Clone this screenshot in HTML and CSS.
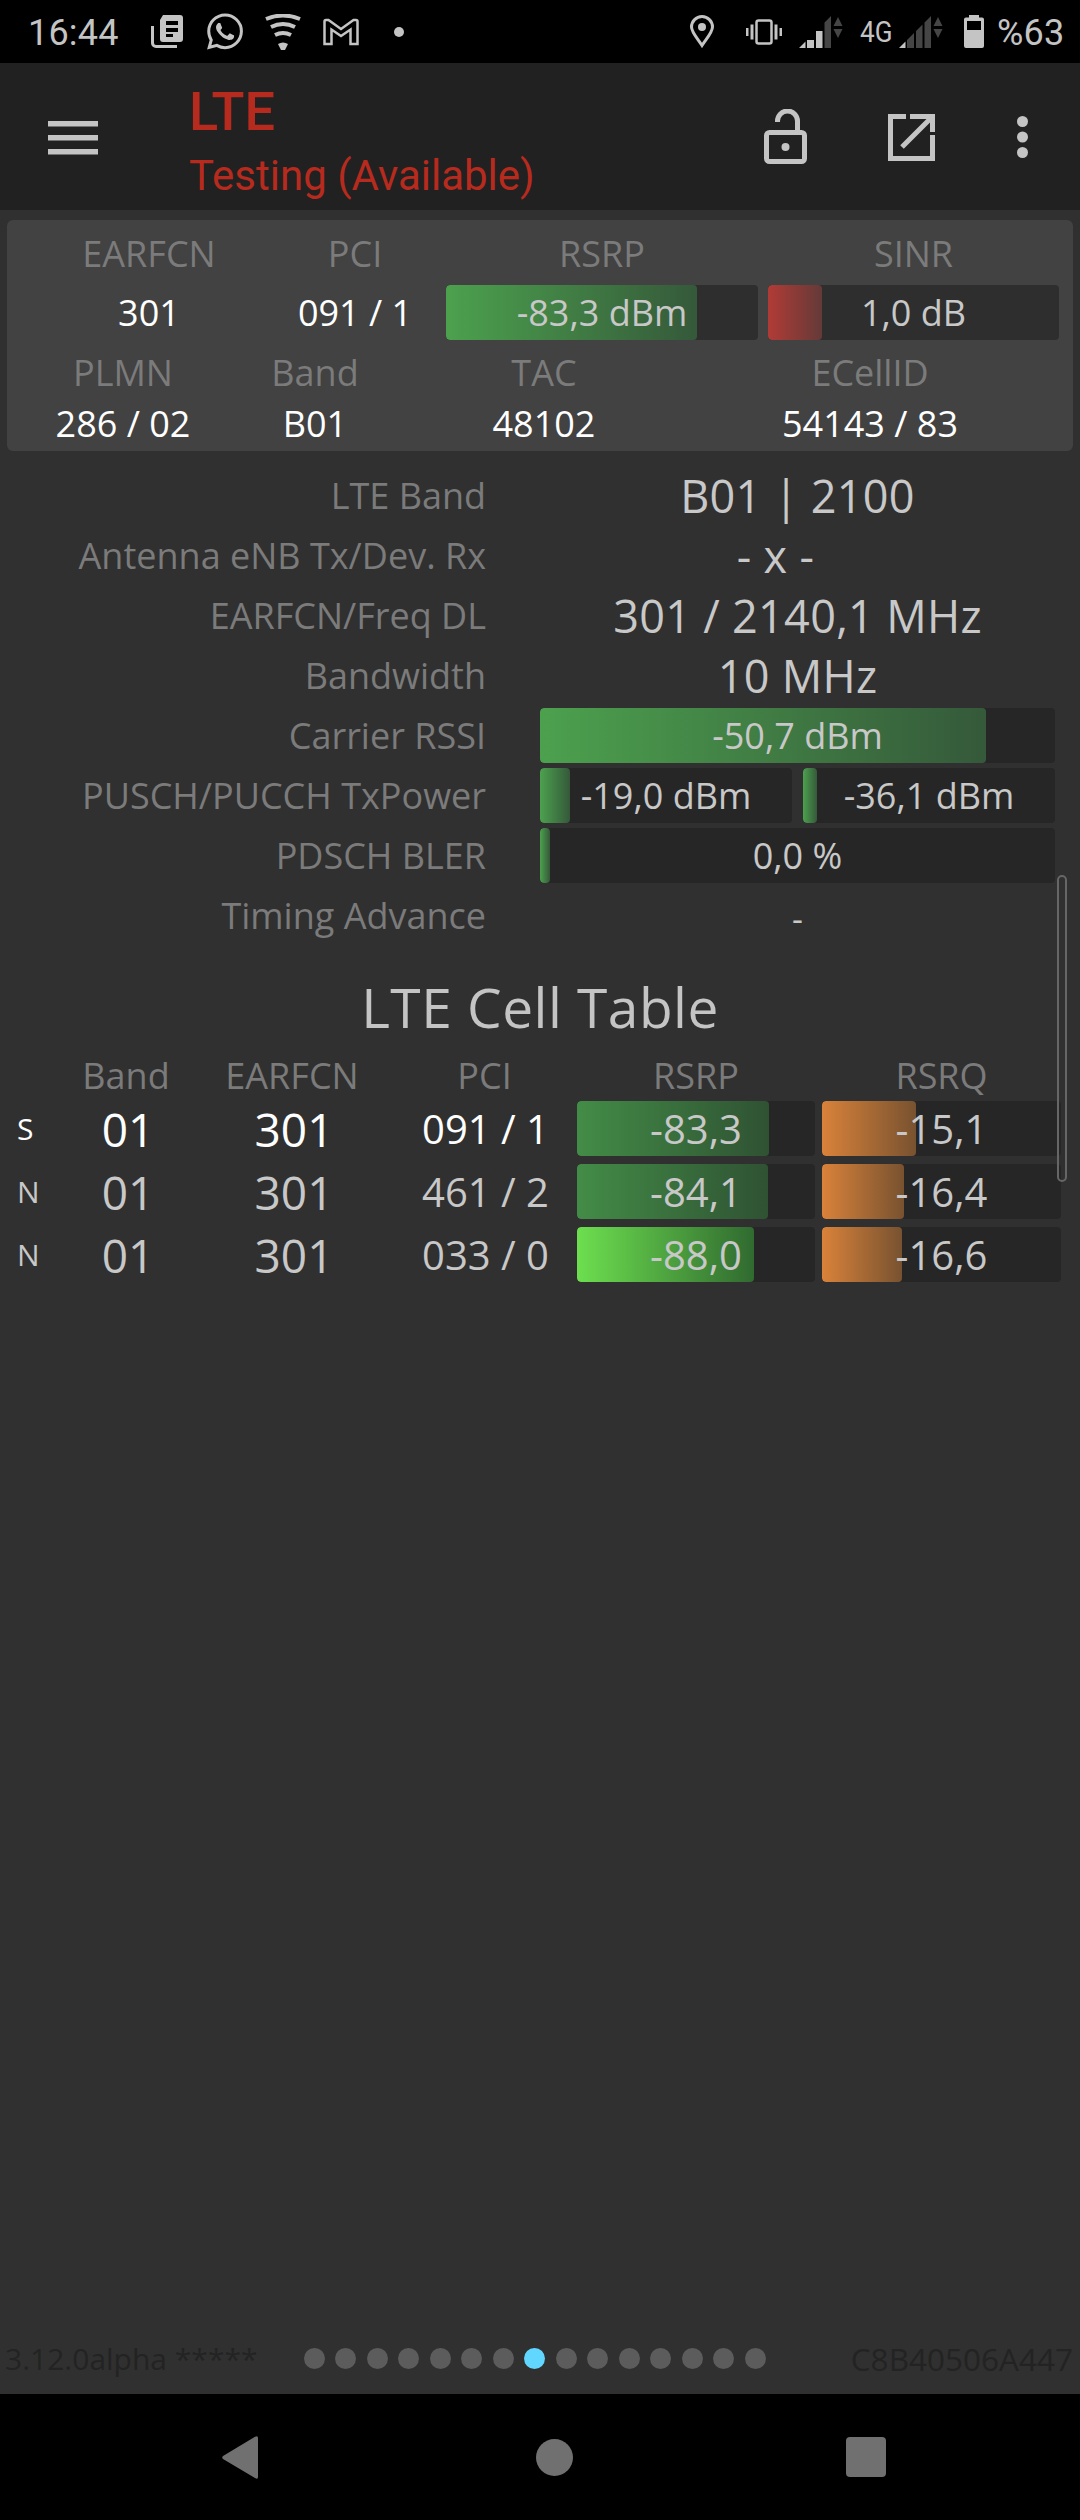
FILE: index.html
```html
<!DOCTYPE html>
<html lang="en">
<head>
<meta charset="utf-8">
<title>LTE Testing</title>
<link rel="stylesheet" href="styles.css">
</head>
<body>
<div class="app">
  <header class="status">
    <span class="clock">16:44</span>
    <svg class="ic ic-news" viewBox="0 0 32 33"><path class="f" fill-rule="evenodd" d="M9 5 12 0H29a3 3 0 0 1 3 3V24a3 3 0 0 1-3 3H12a3 3 0 0 1-3-3ZM15 6V10H27V6ZM15 13V17H27V13ZM15 19V22H22V19Z"/><path class="s3" d="M1.5 11V28a3.500 3.500 0 0 0 3.500 3.500H26"/></svg>
    <svg class="ic ic-wa" viewBox="0 0 24 24"><path class="f" d="M17.472 14.382c-.297-.149-1.758-.867-2.03-.967-.273-.099-.471-.148-.67.15-.197.297-.767.966-.94 1.164-.173.199-.347.223-.644.075-.297-.15-1.255-.463-2.39-1.475-.883-.788-1.48-1.761-1.653-2.059-.173-.297-.018-.458.13-.606.134-.133.298-.347.446-.52.149-.174.198-.298.298-.497.099-.198.05-.371-.025-.52-.075-.149-.669-1.612-.916-2.207-.242-.579-.487-.5-.669-.51-.173-.008-.371-.01-.57-.01-.198 0-.52.074-.792.372-.272.297-1.04 1.016-1.04 2.479 0 1.462 1.065 2.875 1.213 3.074.149.198 2.096 3.2 5.077 4.487.709.306 1.262.489 1.694.625.712.227 1.36.195 1.871.118.571-.085 1.758-.719 2.006-1.413.248-.694.248-1.289.173-1.413-.074-.124-.272-.198-.57-.347m-5.421 7.403h-.004a9.87 9.87 0 01-5.031-1.378l-.361-.214-3.741.982.998-3.648-.235-.374a9.86 9.86 0 01-1.51-5.26c.001-5.45 4.436-9.884 9.888-9.884 2.64 0 5.122 1.03 6.988 2.898a9.825 9.825 0 012.893 6.994c-.003 5.45-4.437 9.884-9.885 9.884m8.413-18.297A11.815 11.815 0 0012.05 0C5.495 0 .16 5.335.157 11.892c0 2.096.547 4.142 1.588 5.945L.057 24l6.305-1.654a11.882 11.882 0 005.683 1.448h.005c6.554 0 11.89-5.335 11.893-11.893a11.821 11.821 0 00-3.48-8.413z"/></svg>
    <svg class="ic ic-wifi" viewBox="0 0 36 36"><path class="s4" d="M1 5Q18-2 35 5M6 13Q18 7 30 13M10 21Q18 17 26 21"/><path class="f" d="M13 30Q18 27 23 30L20 36H16Z"/></svg>
    <svg class="ic ic-m" viewBox="0 0 36 28"><path class="s25" d="M3 2H5.500L18 11 30.500 2H33A1.500 1.500 0 0 1 34.500 3.500V26H27.500V11.500L18 18 8.500 11.500V26H1.500V3.500A1.500 1.500 0 0 1 3 2Z"/></svg>
    <span class="ndot"></span>
    <span class="sp"></span>
    <svg class="ic ic-pin" viewBox="0 0 24 33"><path class="s3" d="M12 30.500C7 23 1.500 17 1.500 12A10.500 10.500 0 0 1 22.500 12C22.500 17 17 23 12 30.500Z"/><circle class="f" cx="12" cy="12" r="4"/></svg>
    <svg class="ic ic-vib" viewBox="0 0 36 26"><rect class="s25" x="10.500" y="1.500" width="15" height="23" rx="2"/><path class="f" d="M0 9H2.500V17H0ZM4.500 5.500H7.500V20.500H4.500ZM28.500 5.500H31.500V20.500H28.500ZM33.500 9H36V17H33.500Z"/></svg>
    <svg class="ic ic-sig" viewBox="0 0 44 32"><path class="f" d="M0 32 6.500 25.500V32ZM8 24H15V32H8ZM17 15H23.500V32H17Z"/><path class="d" d="M25.500 6.500 32 0V32H25.500ZM39 1 43.500 10H34.500ZM34.500 13H43.500L39 22Z"/></svg>
    <span class="net">4G</span>
    <svg class="ic ic-sig2" viewBox="0 0 44 32"><path class="f" d="M0 32 6.500 25.500V32Z"/><path class="d" d="M8 24 15 17V32H8ZM17 15 23.500 8.500V32H17ZM25.500 6.500 32 0V32H25.500ZM39 1 43.500 10H34.500ZM34.500 13H43.500L39 22Z"/></svg>
    <svg class="ic ic-bat" viewBox="0 0 20 33"><path class="f" fill-rule="evenodd" d="M5 0H15V2.500H18A2 2 0 0 1 20 4.500V31A2 2 0 0 1 18 33H2A2 2 0 0 1 0 31V4.500A2 2 0 0 1 2 2.500H5ZM3 6V15H17V6Z"/></svg>
    <span class="pct">%63</span>
  </header>

  <header class="bar">
    <svg class="ic ic-menu" viewBox="0 0 50 34"><path class="f" d="M0 0H50V5.500H0ZM0 14H50V19.500H0ZM0 28H50V33.500H0Z"/></svg>
    <div class="titles">
      <div class="t1">LTE</div>
      <div class="t2">Testing (Available)</div>
    </div>
    <svg class="ic ic-lock" viewBox="0 0 43 55"><path class="s5" d="M13.500 13V12A10 10 0 0 1 33.500 12V22"/><rect class="s5" x="2.500" y="23.500" width="38" height="29" rx="3"/><circle class="f" cx="21.500" cy="38" r="4"/></svg>
    <svg class="ic ic-open" viewBox="0 0 47 47"><path class="s5" d="M18 2.500H2.500V44.500H44.500V21"/><path class="s5" d="M14 33 42 5M22 2.500H44.500V18"/></svg>
    <svg class="ic ic-more" viewBox="0 0 11 42"><circle class="f" cx="5.500" cy="5.500" r="5.500"/><circle class="f" cx="5.500" cy="21" r="5.500"/><circle class="f" cx="5.500" cy="36.500" r="5.500"/></svg>
  </header>

  <main class="main">
    <section class="card">
      <div class="card-top">
        <div class="lb">EARFCN</div>
        <div class="lb">PCI</div>
        <div class="lb push27">RSRP</div>
        <div class="lb push10">SINR</div>
        <div class="val">301</div>
        <div class="val">091 / 1</div>
        <div class="meter push27 on-card"><div class="fill green" style="width:251px"></div><span>-83,3 dBm</span></div>
        <div class="meter push10 on-card"><div class="fill red" style="width:54px"></div><span>1,0 dB</span></div>
      </div>
      <div class="card-bottom">
        <div class="lb">PLMN</div>
        <div class="lb">Band</div>
        <div class="lb">TAC</div>
        <div class="lb">ECellID</div>
        <div class="val">286 / 02</div>
        <div class="val">B01</div>
        <div class="val">48102</div>
        <div class="val">54143 / 83</div>
      </div>
    </section>

    <section class="info">
      <div class="k">LTE Band</div><div class="v">B01 | 2100</div>
      <div class="k">Antenna eNB Tx/Dev. Rx</div><div class="v off">- x -</div>
      <div class="k">EARFCN/Freq DL</div><div class="v">301 / 2140,1 MHz</div>
      <div class="k">Bandwidth</div><div class="v">10 MHz</div>
      <div class="k">Carrier RSSI</div><div class="meter"><div class="fill green" style="width:446px"></div><span>-50,7 dBm</span></div>
      <div class="k">PUSCH/PUCCH TxPower</div>
      <div class="pair">
        <div class="meter"><div class="fill green" style="width:30px"></div><span>-19,0 dBm</span></div>
        <div class="meter"><div class="fill green" style="width:14px"></div><span>-36,1 dBm</span></div>
      </div>
      <div class="k">PDSCH BLER</div><div class="meter"><div class="fill green" style="width:10px"></div><span>0,0 %</span></div>
      <div class="k">Timing Advance</div><div class="v small">-</div>
    </section>

    <h2 class="heading">LTE Cell Table</h2>

    <section class="cells">
      <div></div><div class="lb">Band</div><div class="lb">EARFCN</div><div class="lb">PCI</div><div class="lb">RSRP</div><div class="lb push7">RSRQ</div>

      <div class="mark sel">S</div><div class="big sel">01</div><div class="big sel">301</div><div class="pci sel">091 / 1</div>
      <div class="meter tm"><div class="fill green2" style="width:192px"></div><span>-83,3</span></div>
      <div class="meter tm push7"><div class="fill orange" style="width:94px"></div><span>-15,1</span></div>

      <div class="mark">N</div><div class="big">01</div><div class="big">301</div><div class="pci">461 / 2</div>
      <div class="meter tm"><div class="fill green2" style="width:191px"></div><span>-84,1</span></div>
      <div class="meter tm push7"><div class="fill orange" style="width:82px"></div><span>-16,4</span></div>

      <div class="mark">N</div><div class="big">01</div><div class="big">301</div><div class="pci">033 / 0</div>
      <div class="meter tm"><div class="fill lime" style="width:177px"></div><span>-88,0</span></div>
      <div class="meter tm push7"><div class="fill orange" style="width:80px"></div><span>-16,6</span></div>
    </section>

    <div class="scroll"></div>

    <footer class="foot">
      <span class="ver">3.12.0alpha *****</span>
      <div class="dots">
        <i></i><i></i><i></i><i></i><i></i><i></i><i></i><i class="on"></i><i></i><i></i><i></i><i></i><i></i><i></i><i></i>
      </div>
      <span class="ser">C8B40506A447</span>
    </footer>
  </main>

  <nav class="nav">
    <svg class="ic ic-back" viewBox="0 0 36 43"><path class="n" d="M1 20 33 .8Q36-1 36 2V41Q36 44 33 42L1 23Q-.5 21.500 1 20Z"/></svg>
    <span class="home"></span>
    <span class="recent"></span>
  </nav>
</div>
</body>
</html>
```
FILE: styles.css
```css
* { box-sizing: border-box; }
html, body { margin: 0; padding: 0; }
body { width: 1080px; height: 2520px; background: #303030; font-family: "Open Sans", "Noto Sans", sans-serif; overflow: hidden; }
.app { width: 1080px; height: 2520px; display: flex; flex-direction: column; }

/* icon paint */
.ic { display: block; flex: none; }
.f { fill: #c4c4c4; }
.d { fill: #454545; }
.n { fill: #707070; }
.s25, .s3, .s4, .s5 { fill: none; stroke: #c4c4c4; }
.s25 { stroke-width: 2.5; }
.s3 { stroke-width: 3; }
.s4 { stroke-width: 4; }
.s5 { stroke-width: 5; }

/* status bar */
.status { height: 63px; background: #000; display: flex; align-items: center; padding-left: 28px; color: #c4c4c4; font-family: Roboto, sans-serif; flex: none; }
.clock { font-size: 36px; width: 91px; letter-spacing: .2px; margin-top: 3px; }
.ic-news { width: 32px; height: 33px; margin-left: 32px; }
.ic-wa { width: 36px; height: 37px; margin-left: 24px; }
.ic-wifi { width: 36px; height: 36px; margin-left: 22px; }
.ic-m { width: 36px; height: 28px; margin-left: 22px; }
.ndot { width: 10px; height: 10px; border-radius: 50%; background: #c4c4c4; margin-left: 35px; }
.sp { flex: 1; }
.ic-pin { width: 24px; height: 33px; }
.ic-vib { width: 36px; height: 26px; margin-left: 32px; }
.ic-sig { width: 44px; height: 32px; margin-left: 17px; }
.net { font-size: 30px; width: 32px; margin-left: 17px; transform: scaleX(.87); transform-origin: left center; }
.ic-sig2 { width: 44px; height: 32px; margin-left: 7px; }
.ic-bat { width: 20px; height: 33px; margin-left: 21px; }
.pct { font-size: 36px; width: 83px; margin-left: 13px; letter-spacing: .2px; margin-top: 3px; }

/* app bar */
.bar { height: 147px; background: #212121; display: flex; align-items: center; padding-left: 48px; flex: none; }
.ic-menu { width: 50px; height: 34px; margin-top: 2px; }
.titles { margin-left: 91px; margin-top: 10px; width: 575px; font-family: Roboto, sans-serif; color: #b72a1e; }
.t1 { font-size: 54px; line-height: 62px; font-weight: 500; }
.t2 { font-size: 42px; line-height: 52px; margin-top: 7px; }
.ic-lock { width: 43px; height: 55px; margin-top: -1px; }
.ic-open { width: 47px; height: 47px; margin-left: 81px; margin-top: 1px; }
.ic-more { width: 11px; height: 42px; margin-left: 82px; }

/* main */
.main { flex: 1; display: flex; flex-direction: column; position: relative; }
.card { margin: 10px 7px 0; height: 231px; background: #424242; border-radius: 6px; padding-top: 5px; }
.card-top { display: grid; grid-template-columns: 284px 128px 339px 301px; grid-template-rows: 57px 55px; row-gap: 3px; align-items: center; justify-items: center; }
.card-bottom { display: grid; grid-template-columns: 232px 152px 306px 346px; grid-template-rows: 65px 38px; align-items: center; justify-items: center; }
.push27 { margin-left: 27px; }
.push10 { margin-left: 10px; }
.push7 { margin-left: 7px; }
.lb { font-size: 36px; font-weight: 400; color: #7b7b7b; line-height: 40px; white-space: nowrap; }
.val { font-size: 36px; color: #fff; font-weight: 400; line-height: 44px; white-space: nowrap; }

.meter { position: relative; height: 55px; width: 100%; justify-self: stretch; background: #262626; border-radius: 4px; overflow: hidden; display: flex; align-items: center; justify-content: center; color: #c8c8c8; font-size: 36px; font-weight: 400; }
.meter.push27, .meter.push10, .meter.push7 { width: auto; }
.meter.on-card { background: #2e2e2e; }
.meter span { position: relative; white-space: nowrap; }
.fill { position: absolute; left: 0; top: 0; bottom: 0; border-radius: 4px; }
.green { background: linear-gradient(90deg, #4ca14e, #35593a); }
.green2 { background: linear-gradient(90deg, #438c47, #2f5233); }
.lime { background: linear-gradient(90deg, #6ddf4f, #306a30); }
.orange { background: linear-gradient(90deg, #d9823a, #785230); }
.red { background: linear-gradient(90deg, #b13b36, #643a38); }

.info { display: grid; grid-template-columns: 486px 515px; column-gap: 54px; grid-auto-rows: 60px; align-items: center; margin-top: 14px; }
.k { text-align: right; font-size: 36px; font-weight: 400; color: #7b7b7b; white-space: nowrap; }
.v { text-align: center; font-size: 45px; font-weight: 400; color: #c8c8c8; white-space: nowrap; letter-spacing: .3px; }
.v.off { padding-right: 44px; }
.v.small { font-size: 34px; padding-top: 6px; }
.pair { display: grid; grid-template-columns: 252px 252px; column-gap: 11px; }

.heading { margin: 27px 0 0; text-align: center; font-size: 55px; font-weight: 400; color: #c4c4c4; line-height: 70px; letter-spacing: .5px; }

.cells { display: grid; grid-template-columns: 60px 132px 200px 185px 238px 246px; grid-template-rows: 35px 55px 55px 55px; row-gap: 8px; align-items: center; justify-items: center; margin-top: 16px; }
.mark { font-size: 30px; font-weight: 400; color: #c8c8c8; justify-self: start; padding-left: 17px; }
.mark.sel { color: #fff; }
.big { font-size: 46px; font-weight: 400; color: #c8c8c8; padding-left: 4px; }
.big.sel { color: #fff; }
.pci { font-size: 40px; font-weight: 400; color: #c8c8c8; white-space: nowrap; padding-left: 2px; }
.pci.sel { color: #fff; }
.tm { font-size: 40px; }

.scroll { position: absolute; left: 1057px; top: 665px; width: 10px; height: 307px; border: 2px solid #666; border-radius: 5px; }

.foot { margin-top: auto; height: 71px; display: flex; align-items: center; padding: 0 7px 0 5px; font-size: 30px; color: #232323; font-weight: 400; flex: none; }
.ver { width: 298.5px; white-space: nowrap; }
.dots { display: flex; gap: 10.500px; }
.dots i { width: 21px; height: 21px; border-radius: 50%; background: #5c5c5c; display: block; }
.dots i.on { background: #61d7ff; }
.ser { margin-left: auto; white-space: nowrap; font-size: 31.500px; }

/* nav bar */
.nav { height: 126px; background: #000; flex: none; display: flex; align-items: center; padding-left: 222px; }
.ic-back { width: 36px; height: 43px; }
.home { width: 37px; height: 37px; border-radius: 50%; background: #707070; margin-left: 278px; }
.recent { width: 40px; height: 40px; border-radius: 4px; background: #707070; margin-left: 273px; }
```
